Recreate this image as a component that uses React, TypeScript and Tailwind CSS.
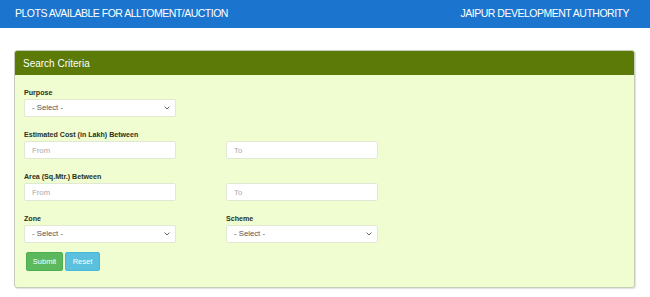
import React from "react";

function Chevron() {
  return (
    <svg width="6" height="4" viewBox="0 0 6 4" fill="none">
      <path d="M0.6 0.6 L3 3 L5.4 0.6" stroke="#555" strokeWidth="0.9" />
    </svg>
  );
}

function SelectBox() {
  return (
    <div className="h-[18px] w-[152px] bg-white border border-[#e2e8d6] rounded-[2px] pl-[7px] pr-[5px] flex items-center justify-between text-[7.75px] text-[#555]">
      <span>- Select -</span>
      <Chevron />
    </div>
  );
}

function InputBox({ ph }: { ph: string }) {
  return (
    <input
      placeholder={ph}
      className="h-[18px] w-[152px] bg-white border border-[#e2e8d6] rounded-[2px] px-[7px] text-[7.75px] text-[#555] placeholder:text-[#aaa] outline-none"
    />
  );
}

function Label({ children }: { children: React.ReactNode }) {
  return <div className="text-[7.1px] font-bold leading-[12px] text-[#2a3018]">{children}</div>;
}

export default function App() {
  return (
    <div className="min-h-screen bg-white font-['Liberation_Sans',Arial,sans-serif]">
      <header className="h-[28px] bg-[#1b75cf] flex items-center justify-between pl-[15px] pr-[21px] text-white text-[10.5px] tracking-[-0.5px] pb-[1px]">
        <span>PLOTS AVAILABLE FOR ALLTOMENT/AUCTION</span>
        <span>JAIPUR DEVELOPMENT AUTHORITY</span>
      </header>
      <div className="pt-[22px] pl-[14px] pr-[15px]">
        <div className="rounded-[3px] border border-[#c5cdb8] bg-[#f0fdd0] shadow-[1px_1px_1px_rgba(0,0,0,0.12)] overflow-hidden">
          <div className="h-[24px] bg-[#5b7a07] text-white text-[10px] px-[8px] flex items-center">
            Search Criteria
          </div>
          <div className="pt-[12px] pb-[16px] px-[9px]">
            <div className="mb-[12px]">
              <Label>Purpose</Label>
              <SelectBox />
            </div>
            <div className="mb-[12px]">
              <Label>Estimated Cost (in Lakh) Between</Label>
              <div className="flex gap-[50px]">
                <InputBox ph="From" />
                <InputBox ph="To" />
              </div>
            </div>
            <div className="mb-[12px]">
              <Label>Area (Sq.Mtr.) Between</Label>
              <div className="flex gap-[50px]">
                <InputBox ph="From" />
                <InputBox ph="To" />
              </div>
            </div>
            <div className="mb-[9px] flex gap-[50px]">
              <div>
                <Label>Zone</Label>
                <SelectBox />
              </div>
              <div>
                <Label>Scheme</Label>
                <SelectBox />
              </div>
            </div>
            <div className="flex gap-[2px] pl-[2px]">
              <button className="h-[19px] w-[37px] rounded-[2px] bg-[#5cb85c] border border-[#4cae4c] text-white text-[7.5px]">
                Submit
              </button>
              <button className="h-[19px] w-[35px] rounded-[2px] bg-[#5bc0de] border border-[#46b8da] text-white text-[7.5px]">
                Reset
              </button>
            </div>
          </div>
        </div>
      </div>
    </div>
  );
}
